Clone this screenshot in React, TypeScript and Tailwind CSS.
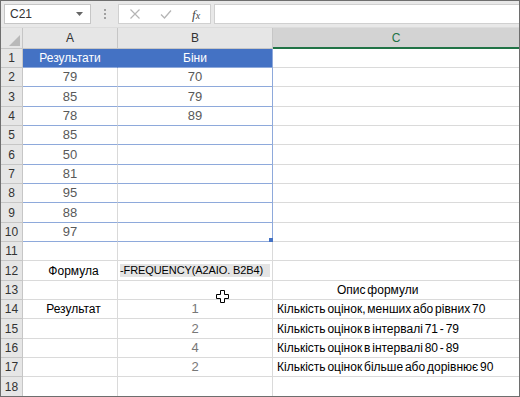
import React from "react";

type Row = {
  a?: string;
  b?: string;
  c?: string;
  kind?: "head" | "table" | "formula" | "plain";
};

const rows: Row[] = [
  { a: "Результати", b: "Біни", kind: "head" },
  { a: "79", b: "70", kind: "table" },
  { a: "85", b: "79", kind: "table" },
  { a: "78", b: "89", kind: "table" },
  { a: "85", kind: "table" },
  { a: "50", kind: "table" },
  { a: "81", kind: "table" },
  { a: "95", kind: "table" },
  { a: "88", kind: "table" },
  { a: "97", kind: "table" },
  {},
  { a: "Формула", b: "-FREQUENCY(A2AIO. B2B4)", kind: "formula" },
  { c: "Опис формули" },
  { a: "Результат", b: "1", c: "Кількість оцінок, менших або рівних 70" },
  { b: "2", c: "Кількість оцінок в інтервалі 71 - 79" },
  { b: "4", c: "Кількість оцінок в інтервалі 80 - 89" },
  { b: "2", c: "Кількість оцінок більше або дорівнює 90" },
  {},
];

const heights = ["h-[19px]", "h-[19px]", "h-[20px]"];

function MoveCursor() {
  return (
    <svg width="13" height="13" viewBox="0 0 13 13" className="absolute left-[-7px] top-[-7px]">
      <path
        d="M4.5 0.5h4v4h4v4h-4v4h-4v-4h-4v-4h4z"
        fill="#fff"
        stroke="#000"
        strokeWidth="1"
        strokeLinejoin="round"
      />
    </svg>
  );
}

function SheetRow({ row, index }: { row: Row; index: number }) {
  const h = heights[index % 3];
  const kind = row.kind ?? "plain";
  const inTable = kind === "head" || kind === "table";
  const isHead = kind === "head";

  return (
    <div className={`flex ${h} shrink-0`}>
      <div className="w-[22px] shrink-0 bg-[#e6e6e6] border-r border-b border-[#c6c6c6] flex items-center justify-center text-[12px] text-[#333]">
        {index + 1}
      </div>
      <div
        className={`w-[95px] shrink-0 border-b border-r flex items-center justify-center ${
          isHead
            ? "bg-[#4472c4] text-white border-[#4472c4] border-b-[#8ea9db]"
            : inTable
            ? "border-r-[#d9d9d9] border-b-[#8ea9db] text-[#595959] text-[13px]"
            : "border-[#dadada] text-black pl-[7px]"
        }`}
      >
        {row.a}
      </div>
      <div
        className={`relative w-[155px] shrink-0 border-b border-r flex items-center ${
          isHead
            ? "bg-[#4472c4] text-white border-[#8ea9db] justify-center"
            : inTable
            ? "border-[#8ea9db] text-[#595959] text-[13px] justify-center"
            : kind === "formula"
            ? "border-[#dadada] text-black pl-[2px] pr-[2px]"
            : "border-[#dadada] text-[#777] text-[13px] justify-center"
        }`}
      >
        {kind === "formula" ? (
          <span className="block w-full h-[13px] leading-[13px] bg-[#e4e4e4] whitespace-nowrap text-[11px] tracking-[-0.1px]">
            {row.b}
          </span>
        ) : (
          row.b
        )}
        {index === 9 && <span className="absolute right-[-1px] bottom-[-1px] w-[4px] h-[4px] bg-[#4472c4]" />}
        {index === 12 && (
          <span className="absolute left-[105px] top-[16px]">
            <MoveCursor />
          </span>
        )}
      </div>
      <div
        className={`flex-1 border-b border-[#dadada] flex items-center whitespace-nowrap [word-spacing:-1.5px] ${
          index === 12 ? "pl-[64px]" : "pl-[4px]"
        }`}
      >
        {row.c}
      </div>
    </div>
  );
}

export default function App() {
  return (
    <div className="w-[520px] h-[397px] overflow-hidden border border-[#6e6e6e] bg-white flex flex-col text-[12px] font-['Liberation_Sans',Arial,sans-serif]">
      {/* formula bar */}
      <div className="h-[27px] shrink-0 bg-[#e8e8e8] flex items-start pt-[3px] border-b border-[#dcdcdc]">
        <div className="ml-[3px] w-[87px] h-[20px] bg-white border border-[#c6c6c6] flex items-center justify-between pl-[5px] pr-[7px] text-[12px] text-[#333]">
          <span>C21</span>
          <svg width="7" height="4" viewBox="0 0 7 4">
            <path d="M0 0h7L3.5 4z" fill="#666" />
          </svg>
        </div>
        <div className="w-[27px] h-[20px] flex flex-col items-center justify-center gap-[2px]">
          <span className="w-[2px] h-[2px] bg-[#a0a0a0]" />
          <span className="w-[2px] h-[2px] bg-[#a0a0a0]" />
          <span className="w-[2px] h-[2px] bg-[#a0a0a0]" />
        </div>
        <div className="w-[93px] h-[20px] bg-white border border-[#d0d0d0] flex items-center">
          <svg width="12" height="12" viewBox="0 0 12 12" className="ml-[10px]">
            <path d="M1.5 1.5l9 9M10.5 1.5l-9 9" stroke="#b5b5b5" strokeWidth="1.2" />
          </svg>
          <svg width="12" height="12" viewBox="0 0 12 12" className="ml-[19px]">
            <path d="M1 6.5l3.5 3.5L11 2.5" stroke="#b5b5b5" strokeWidth="1.3" fill="none" />
          </svg>
          <span className="ml-[20px] text-[13px] italic text-[#444] font-['Liberation_Serif',serif] leading-none">
            f<span className="text-[10px]">x</span>
          </span>
        </div>
        <div className="ml-[3px] flex-1 h-[20px] bg-white border border-[#d0d0d0] border-r-0" />
      </div>

      {/* column headers */}
      <div className="flex h-[21px] shrink-0">
        <div className="relative w-[22px] shrink-0 bg-[#e6e6e6] border-r border-b border-[#c6c6c6]">
          <svg width="11" height="11" viewBox="0 0 11 11" className="absolute right-[2px] bottom-[2px]">
            <path d="M11 0V11H0z" fill="#b9b9b9" />
          </svg>
        </div>
        <div className="w-[95px] shrink-0 bg-[#e6e6e6] border-r border-b border-[#c6c6c6] flex items-center justify-center text-[#333]">
          A
        </div>
        <div className="w-[155px] shrink-0 bg-[#e6e6e6] border-r border-b border-[#c6c6c6] flex items-center justify-center text-[#333]">
          B
        </div>
        <div className="flex-1 bg-[#d3d3d3] border-b-2 border-[#217346] flex items-center justify-center text-[#217346]">
          C
        </div>
      </div>

      {rows.map((row, i) => (
        <SheetRow key={i} row={row} index={i} />
      ))}
    </div>
  );
}
